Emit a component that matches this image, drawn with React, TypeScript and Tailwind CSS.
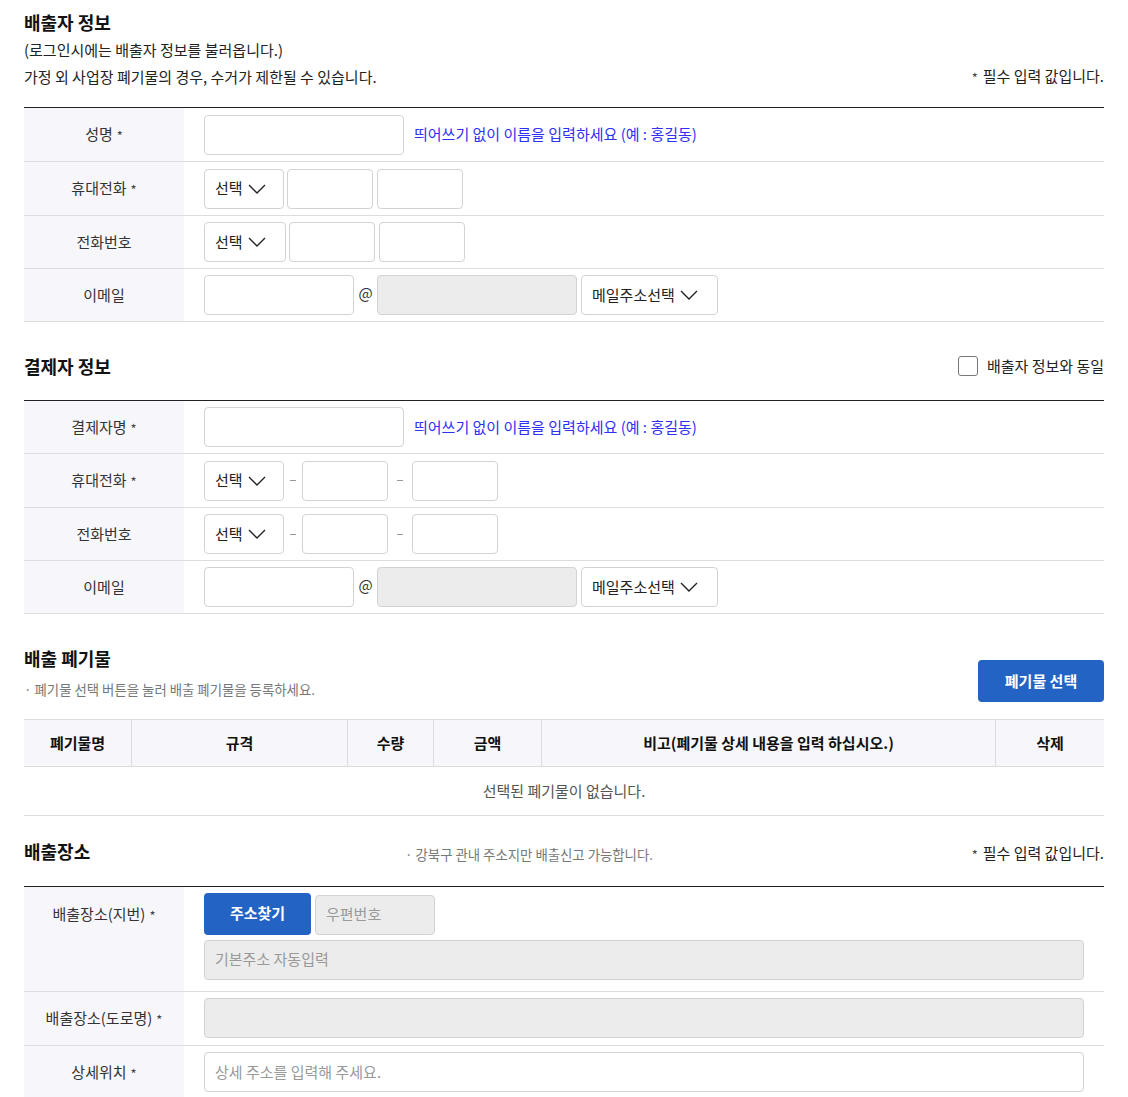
import React from 'react'

// ─── Small pieces ─────────────────────────────────────────────────────────────

const FONT = '"Noto Sans CJK KR", "Noto Sans", sans-serif'

function Star() {
  return <span className="ml-[4px] text-[13px] text-[#444] relative top-[1px]">*</span>
}

function Chevron() {
  return (
    <svg width="18" height="10" viewBox="0 0 18 10" className="ml-[5px]">
      <polyline points="1,1 9,9 17,1" fill="none" stroke="#222" strokeWidth="1.4" />
    </svg>
  )
}

function Select({ label, w }: { label: string; w: string }) {
  return (
    <div className={`${w} shrink-0 h-[40px] flex items-center pl-[10px] border border-[#d3d3d3] rounded-[4px] bg-white text-[15px] text-[#222]`}>
      {label}
      <Chevron />
    </div>
  )
}

function Box({ w, gray, placeholder, className = '' }: { w: string; gray?: boolean; placeholder?: string; className?: string }) {
  return (
    <div
      className={`${w} ${className} shrink-0 h-[40px] flex items-center px-[10px] border border-[#d3d3d3] rounded-[4px] text-[15px] text-[#999] ${
        gray ? 'bg-[#ececec]' : 'bg-white'
      }`}
    >
      {placeholder}
    </div>
  )
}

function Row({ label, star, children, top, tall }: { label: string; star?: boolean; children: React.ReactNode; top?: boolean; tall?: boolean }) {
  return (
    <div className="flex border-b border-[#dddddd]">
      <div
        className={`w-[160px] shrink-0 bg-[#f7f7fb] flex justify-center text-[15px] text-[#333] ${
          top ? 'items-start pt-[16px]' : 'items-center'
        }`}
      >
        <span>
          {label}
          {star && <Star />}
        </span>
      </div>
      <div
        className={`flex-1 px-[20px] flex flex-col justify-center ${
          top ? 'pt-[6px] pb-[11px] gap-[5px]' : tall ? 'min-h-[53px]' : 'min-h-[52px]'
        }`}
      >
        {children}
      </div>
    </div>
  )
}

function Hint() {
  return <span className="ml-[10px] text-[15px] text-[#3030f5]">띄어쓰기 없이 이름을 입력하세요 (예 : 홍길동)</span>
}

function Dash({ w }: { w: string }) {
  return (
    <span className={`${w} shrink-0 flex justify-center`}>
      <span className="w-[6px] h-[1px] bg-[#999]" />
    </span>
  )
}

function EmailRow() {
  return (
    <Row label="이메일">
      <div className="flex items-center">
        <Box w="w-[150px]" />
        <span className="w-[23px] text-center text-[15px] text-[#333] -mt-[4px]">@</span>
        <Box w="w-[200px]" gray />
        <Select label="메일주소선택" w="w-[137px] ml-[4px]" />
      </div>
    </Row>
  )
}

function Required() {
  return (
    <span className="text-[15px] text-[#222]">
      <span className="text-[13px] text-[#444] mr-[5px] relative top-[1px]">*</span>필수 입력 값입니다.
    </span>
  )
}

// ─── Page ─────────────────────────────────────────────────────────────────────

const COLS = [
  { label: '폐기물명', w: 'w-[108px]' },
  { label: '규격', w: 'w-[216px]' },
  { label: '수량', w: 'w-[86px]' },
  { label: '금액', w: 'w-[108px]' },
  { label: '비고(폐기물 상세 내용을 입력 하십시오.)', w: 'w-[454px]' },
  { label: '삭제', w: 'flex-1' },
]

export default function App() {
  return (
    <div className="w-[1128px] bg-white px-[24px]" style={{ fontFamily: FONT }}>
      {/* 배출자 정보 */}
      <h2 className="pt-[9px] text-[18px] font-bold leading-[26px] text-[#111]">배출자 정보</h2>
      <p className="mt-[2px] text-[15px] leading-[26px] text-[#222]">(로그인시에는 배출자 정보를 불러옵니다.)</p>
      <div className="flex items-center justify-between leading-[26px]">
        <p className="text-[15px] text-[#222]">가정 외 사업장 폐기물의 경우, 수거가 제한될 수 있습니다.</p>
        <Required />
      </div>

      <div className="mt-[17px] border-t border-[#222]">
        <Row label="성명" star tall>
          <div className="flex items-center">
            <Box w="w-[200px]" />
            <Hint />
          </div>
        </Row>
        <Row label="휴대전화" star tall>
          <div className="flex items-center">
            <Select label="선택" w="w-[80px]" />
            <Box w="w-[86px]" className="ml-[3px]" />
            <Box w="w-[86px]" className="ml-[4px]" />
          </div>
        </Row>
        <Row label="전화번호">
          <div className="flex items-center">
            <Select label="선택" w="w-[82px]" />
            <Box w="w-[86px]" className="ml-[3px]" />
            <Box w="w-[86px]" className="ml-[4px]" />
          </div>
        </Row>
        <EmailRow />
      </div>

      {/* 결제자 정보 */}
      <div className="mt-[31px] flex items-center justify-between">
        <h2 className="text-[18px] font-bold leading-[26px] text-[#111]">결제자 정보</h2>
        <label className="flex items-center gap-[9px] text-[15px] text-[#222]">
          <span className="w-[20px] h-[20px] border border-[#777] rounded-[3px] bg-white" />
          배출자 정보와 동일
        </label>
      </div>

      <div className="mt-[21px] border-t border-[#222]">
        <Row label="결제자명" star>
          <div className="flex items-center">
            <Box w="w-[200px]" />
            <Hint />
          </div>
        </Row>
        <Row label="휴대전화" star tall>
          <div className="flex items-center">
            <Select label="선택" w="w-[80px]" />
            <Dash w="w-[18px]" />
            <Box w="w-[86px]" />
            <Dash w="w-[24px]" />
            <Box w="w-[86px]" />
          </div>
        </Row>
        <Row label="전화번호">
          <div className="flex items-center">
            <Select label="선택" w="w-[80px]" />
            <Dash w="w-[18px]" />
            <Box w="w-[86px]" />
            <Dash w="w-[24px]" />
            <Box w="w-[86px]" />
          </div>
        </Row>
        <EmailRow />
      </div>

      {/* 배출 폐기물 */}
      <div className="mt-[31px] flex items-start justify-between">
        <div>
          <h2 className="text-[18px] font-bold leading-[26px] text-[#111]">배출 폐기물</h2>
          <p className="mt-[8px] text-[13.4px] leading-[20px] text-[#777]">· 폐기물 선택 버튼을 눌러 배출 폐기물을 등록하세요.</p>
        </div>
        <button className="mt-[15px] w-[126px] h-[42px] rounded-[4px] bg-[#2263c3] text-[15px] font-bold text-white">
          폐기물 선택
        </button>
      </div>

      <div className="mt-[17px] border-t border-[#dddddd]">
        <div className="flex h-[47px] bg-[#f7f7fb] border-b border-[#dddddd]">
          {COLS.map((c, i) => (
            <div
              key={c.label}
              className={`${c.w} flex items-center justify-center text-[15px] font-bold text-[#111] ${
                i < COLS.length - 1 ? 'border-r border-[#dddddd]' : ''
              }`}
            >
              {c.label}
            </div>
          ))}
        </div>
        <div className="h-[49px] flex items-center justify-center border-b border-[#dddddd] text-[15px] text-[#555]">
          선택된 폐기물이 없습니다.
        </div>
      </div>

      {/* 배출장소 */}
      <div className="mt-[22px] flex items-center">
        <h2 className="w-[381px] text-[18px] font-bold leading-[26px] text-[#111]">배출장소</h2>
        <p className="text-[13.4px] text-[#777] mt-[6px]">· 강북구 관내 주소지만 배출신고 가능합니다.</p>
        <div className="flex-1 flex justify-end mt-[4px]">
          <Required />
        </div>
      </div>

      <div className="mt-[21px] border-t border-[#222]">
        <Row label="배출장소(지번)" star top>
          <div className="flex items-center">
            <button className="w-[107px] h-[42px] rounded-[4px] bg-[#2263c3] text-[15px] font-bold text-white">주소찾기</button>
            <Box w="w-[120px]" gray placeholder="우편번호" className="ml-[4px] mt-[2px]" />
          </div>
          <Box w="w-full" gray placeholder="기본주소 자동입력" />
        </Row>
        <Row label="배출장소(도로명)" star tall>
          <Box w="w-full" gray />
        </Row>
        <div className="flex">
          <div className="w-[160px] shrink-0 bg-[#f7f7fb] flex items-center justify-center text-[15px] text-[#333]">
            <span>
              상세위치
              <Star />
            </span>
          </div>
          <div className="flex-1 px-[20px] min-h-[53px] flex items-center">
            <Box w="w-full" placeholder="상세 주소를 입력해 주세요." />
          </div>
        </div>
      </div>
    </div>
  )
}
